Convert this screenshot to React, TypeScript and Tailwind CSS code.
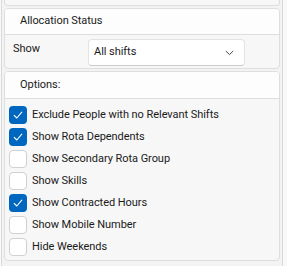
import React from "react";

function Check({ checked }: { checked: boolean }) {
  if (checked) {
    return (
      <div className="w-[18px] h-[18px] rounded-[4px] bg-[#0067c0] flex items-center justify-center shrink-0">
        <svg width="12" height="12" viewBox="0 0 12 12" fill="none">
          <path d="M2.2 6.4 L4.8 9 L9.8 3.2" stroke="white" strokeWidth="1.1" strokeLinecap="round" strokeLinejoin="round" />
        </svg>
      </div>
    );
  }
  return <div className="w-[18px] h-[18px] rounded-[4px] bg-white border border-[#d0d0d0] shrink-0" />;
}

const options: [string, boolean][] = [
  ["Exclude People with no Relevant Shifts", true],
  ["Show Rota Dependents", true],
  ["Show Secondary Rota Group", false],
  ["Show Skills", false],
  ["Show Contracted Hours", true],
  ["Show Mobile Number", false],
  ["Hide Weekends", false],
];

export default function App() {
  return (
    <div className="w-[287px] h-[266px] bg-[#f9f9f9] overflow-hidden font-['Roboto',sans-serif] text-[11px] tracking-[-0.05px] text-[#1a1a1a]">
      <div className="ml-[1px] w-[282px] h-full border-x border-[#d9d9d9] bg-[#f3f3f3] px-[2px] flex flex-col gap-[2px]">
        <div className="h-[6px] border border-t-0 border-[#dedede] rounded-b-[4px] bg-[#f7f7f7] shrink-0" />
        <div className="border border-[#dedede] rounded-[4px] bg-[#f7f7f7] shrink-0 overflow-hidden">
          <div className="h-[26px] bg-[#fdfdfd] border-b border-[#dedede] pl-[15px] flex items-center">
            Allocation Status
          </div>
          <div className="h-[33px] flex items-start">
            <div className="w-[83px] pl-[8px] pt-[6px]">Show</div>
            <div className="mt-[4px] w-[157px] h-[27px] bg-white border border-[#e3e3e3] border-b-[#cccccc] rounded-[4px] flex items-center pl-[5px] pr-[10px] justify-between">
              <span>All shifts</span>
              <svg width="9" height="6" viewBox="0 0 9 6" fill="none">
                <path d="M0.8 1 L4.5 4.6 L8.2 1" stroke="#444" strokeWidth="1" />
              </svg>
            </div>
          </div>
        </div>
        <div className="border border-[#dedede] rounded-[4px] bg-[#f7f7f7] shrink-0 overflow-hidden">
          <div className="h-[27px] bg-[#fdfdfd] border-b border-[#dedede] pl-[15px] flex items-center">
            Options:
          </div>
          <div className="h-[161px] pt-[7px] pl-[4px] flex flex-col gap-[4px]">
            {options.map(([label, c]) => (
              <div key={label} className="flex items-center gap-[5px] h-[18px]">
                <Check checked={c} />
                <span>{label}</span>
              </div>
            ))}
          </div>
        </div>
      </div>
    </div>
  );
}
